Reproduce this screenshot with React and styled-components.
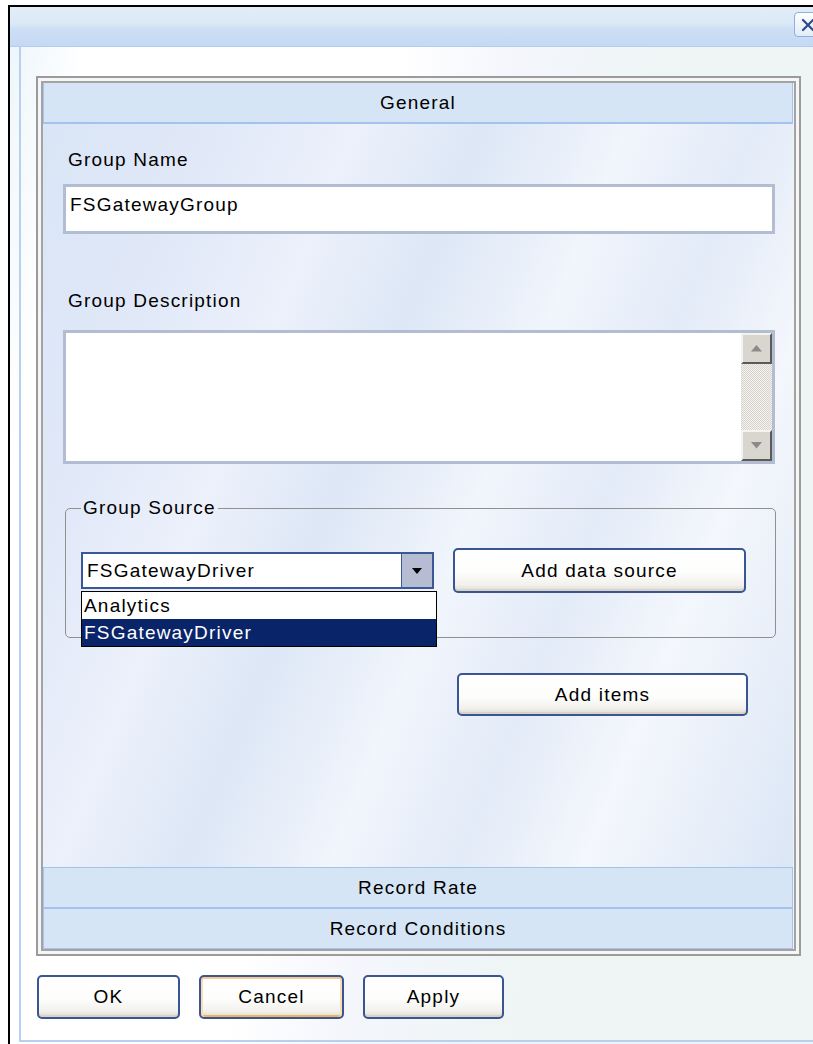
import React from "react";
import styled, { createGlobalStyle } from "styled-components";

const GlobalStyle = createGlobalStyle`
  html, body {
    margin: 0;
    padding: 0;
    background: #fff;
    overflow: hidden;
  }
  body {
    font-family: "Liberation Sans", Arial, sans-serif;
  }
`;

const text = `
  font-family: "Liberation Sans", Arial, sans-serif;
  font-size: 19px;
  letter-spacing: 1.2px;
  color: #000;
`;

const Window = styled.div`
  margin: 5px 0 0 8px;
  height: 1039px;
  box-sizing: border-box;
  border-top: 2px solid #000;
  border-left: 2px solid #000;
  display: flex;
  flex-direction: column;
  overflow: hidden;
`;

const TitleBar = styled.div`
  position: relative;
  height: 40px;
  flex-shrink: 0;
  box-sizing: border-box;
  background: linear-gradient(#e2edf7 0%, #dbe8f6 42%, #cddff5 58%, #c5d9f4 100%);
  border-bottom: 1px solid #b4cdee;
`;

const CloseButton = styled.div`
  position: absolute;
  top: 5px;
  right: -9px;
  width: 28px;
  height: 25px;
  box-sizing: border-box;
  border: 1px solid #8fb0de;
  border-radius: 4px;
  background: linear-gradient(#fdfeff, #e2ecf8);
  display: flex;
  align-items: center;
  justify-content: center;
`;

const Body = styled.div`
  flex: 1;
  display: flex;
  padding: 0 0 2px 9px;
  background: linear-gradient(
    100deg,
    #eef6fb 0%,
    #ffffff 8%,
    #ffffff 40%,
    #f4f6fc 52%,
    #eef5f4 70%,
    #eef5f4 100%
  );
`;

const Frame = styled.div`
  flex: 1;
  display: flex;
  flex-direction: column;
  padding: 29px 0 0 15px;
  border-left: 2px solid #b7d0f1;
  border-bottom: 2px solid #b7d0f1;
`;

const Panel = styled.div`
  width: 765px;
  height: 880px;
  box-sizing: border-box;
  border: 2px solid #9b9b9b;
  box-shadow: inset 0 0 0 3px #f6f6f6, inset 0 0 0 5px #a3a3a3;
  padding: 5px 6px 5px 5px;
  display: flex;
  flex-direction: column;
`;

const SectionHeader = styled.div`
  ${text}
  height: 41px;
  flex-shrink: 0;
  box-sizing: border-box;
  border: 1px solid #a3c2ee;
  border-top-width: ${(p) => (p.$first ? 0 : 1)}px;
  border-bottom-width: ${(p) => (p.$first ? 2 : 1)}px;
  background: #d6e5f5;
  display: flex;
  align-items: center;
  justify-content: center;
`;

const Content = styled.div`
  flex: 1;
  padding: 25px 19px 0 20px;
  background: linear-gradient(
    112deg,
    #d9e5f6 0%,
    #e2e9f8 18%,
    #ecf1fb 30%,
    #dde7f6 42%,
    #f1f5fc 56%,
    #e3ebf8 68%,
    #f4f7fc 80%,
    #dbe6f6 100%
  );
`;

const Label = styled.div`
  ${text}
  line-height: 22px;
  padding-left: 5px;
  margin-top: ${(p) => p.$top || 0}px;
  margin-bottom: ${(p) => p.$bottom || 0}px;
`;

const TextInput = styled.input`
  ${text}
  display: block;
  width: 712px;
  height: 50px;
  box-sizing: border-box;
  margin: 0;
  padding: 0 4px 8px 4px;
  border: 3px solid #b3bdd1;
  background: #fff;
  outline: none;
`;

const Memo = styled.div`
  display: flex;
  width: 712px;
  height: 134px;
  box-sizing: border-box;
  border: 3px solid #b3bdd1;
  background: #fff;
`;

const MemoText = styled.div`
  flex: 1;
`;

const ScrollBar = styled.div`
  width: 31px;
  display: flex;
  flex-direction: column;
`;

const ScrollButton = styled.div`
  height: 31px;
  box-sizing: border-box;
  background: #d9d6cf;
  border-top: 2px solid #f4f3ef;
  border-left: 2px solid #f4f3ef;
  border-right: 2px solid #5a5a5a;
  border-bottom: 2px solid #5a5a5a;
  display: flex;
  align-items: center;
  justify-content: center;
`;

const ScrollTrack = styled.div`
  flex: 1;
  background-color: #f2f1ee;
  background-image: repeating-conic-gradient(#d6d3cc 0% 25%, #f4f3f0 0% 50%);
  background-size: 2px 2px;
`;

const SourceBox = styled.fieldset`
  margin: 33px 0 0 2px;
  width: 711px;
  box-sizing: border-box;
  padding: 29px 29px 44px 15px;
  border: 1px solid #909090;
  border-radius: 5px;
`;

const Legend = styled.legend`
  ${text}
  line-height: 22px;
  padding: 0 2px;
`;

const SourceRow = styled.div`
  display: flex;
  align-items: center;
  gap: 19px;
`;

const ComboWrap = styled.div`
  position: relative;
`;

const Combo = styled.div`
  width: 353px;
  height: 37px;
  box-sizing: border-box;
  display: flex;
  border: 2px solid #3a5796;
  background: #fff;
`;

const ComboValue = styled.div`
  ${text}
  flex: 1;
  padding-left: 4px;
  display: flex;
  align-items: center;
`;

const ComboArrow = styled.div`
  width: 30px;
  border-left: 1px solid #3a5796;
  background: #b6bdd3;
  display: flex;
  align-items: center;
  justify-content: center;
`;

const DropList = styled.div`
  position: absolute;
  top: 39px;
  left: 0;
  width: 356px;
  box-sizing: border-box;
  border: 1px solid #000;
  background: #fff;
  z-index: 2;
`;

const DropItem = styled.div`
  ${text}
  height: 27px;
  line-height: 27px;
  padding-left: 2px;
  background: ${(p) => (p.$selected ? "#0a246a" : "#fff")};
  color: ${(p) => (p.$selected ? "#fff" : "#000")};
`;

const Button = styled.button`
  ${text}
  width: ${(p) => p.$w}px;
  height: ${(p) => p.$h || 44}px;
  margin: 0;
  padding: 0;
  box-sizing: border-box;
  border: 2px solid #3a5594;
  border-radius: 5px;
  background: linear-gradient(#ffffff 0%, #fdfdfc 55%, #f2f1ec 85%, #dedad0 100%);
  box-shadow: ${(p) =>
    p.$hot
      ? "inset 0 2px 0 #f9c98a, inset 2px 0 0 #fbdcb0, inset -2px 0 0 #fbdcb0, inset 0 -2px 0 #f1b25c"
      : "inset 0 -2px 0 #d8d4ca"};
  cursor: default;
`;

const ItemsRow = styled.div`
  margin: 35px 0 0 394px;
`;

const Footer = styled.div`
  display: flex;
  gap: 19px;
  margin: 19px 0 0 1px;
`;

const Triangle = ({ dir, color, size = 11 }) => (
  <svg width={size} height={size * 0.6} viewBox="0 0 10 6">
    {dir === "up" ? (
      <polygon points="0,6 10,6 5,0" fill={color} />
    ) : (
      <polygon points="0,0 10,0 5,6" fill={color} />
    )}
  </svg>
);

export default function App() {
  return (
    <>
      <GlobalStyle />
      <Window>
        <TitleBar>
          <CloseButton>
            <svg width="14" height="14" viewBox="0 0 14 14">
              <path
                d="M2 2 L12 12 M12 2 L2 12"
                stroke="#2d4a8c"
                strokeWidth="2.2"
                strokeLinecap="round"
              />
            </svg>
          </CloseButton>
        </TitleBar>
        <Body>
          <Frame>
            <Panel>
              <SectionHeader $first>General</SectionHeader>
              <Content>
                <Label $bottom={13}>Group Name</Label>
                <TextInput defaultValue="FSGatewayGroup" readOnly />

                <Label $top={56} $bottom={18}>
                  Group Description
                </Label>
                <Memo>
                  <MemoText />
                  <ScrollBar>
                    <ScrollButton>
                      <Triangle dir="up" color="#8a8a8a" />
                    </ScrollButton>
                    <ScrollTrack />
                    <ScrollButton>
                      <Triangle dir="down" color="#8a8a8a" />
                    </ScrollButton>
                  </ScrollBar>
                </Memo>

                <SourceBox>
                  <Legend>Group Source</Legend>
                  <SourceRow>
                    <ComboWrap>
                      <Combo>
                        <ComboValue>FSGatewayDriver</ComboValue>
                        <ComboArrow>
                          <Triangle dir="down" color="#000" size={10} />
                        </ComboArrow>
                      </Combo>
                      <DropList>
                        <DropItem>Analytics</DropItem>
                        <DropItem $selected>FSGatewayDriver</DropItem>
                      </DropList>
                    </ComboWrap>
                    <Button $w={293} $h={45}>
                      Add data source
                    </Button>
                  </SourceRow>
                </SourceBox>

                <ItemsRow>
                  <Button $w={291} $h={43}>
                    Add items
                  </Button>
                </ItemsRow>
              </Content>
              <SectionHeader>Record Rate</SectionHeader>
              <SectionHeader>Record Conditions</SectionHeader>
            </Panel>
            <Footer>
              <Button $w={143}>OK</Button>
              <Button $w={145} $hot>
                Cancel
              </Button>
              <Button $w={141}>Apply</Button>
            </Footer>
          </Frame>
        </Body>
      </Window>
    </>
  );
}
